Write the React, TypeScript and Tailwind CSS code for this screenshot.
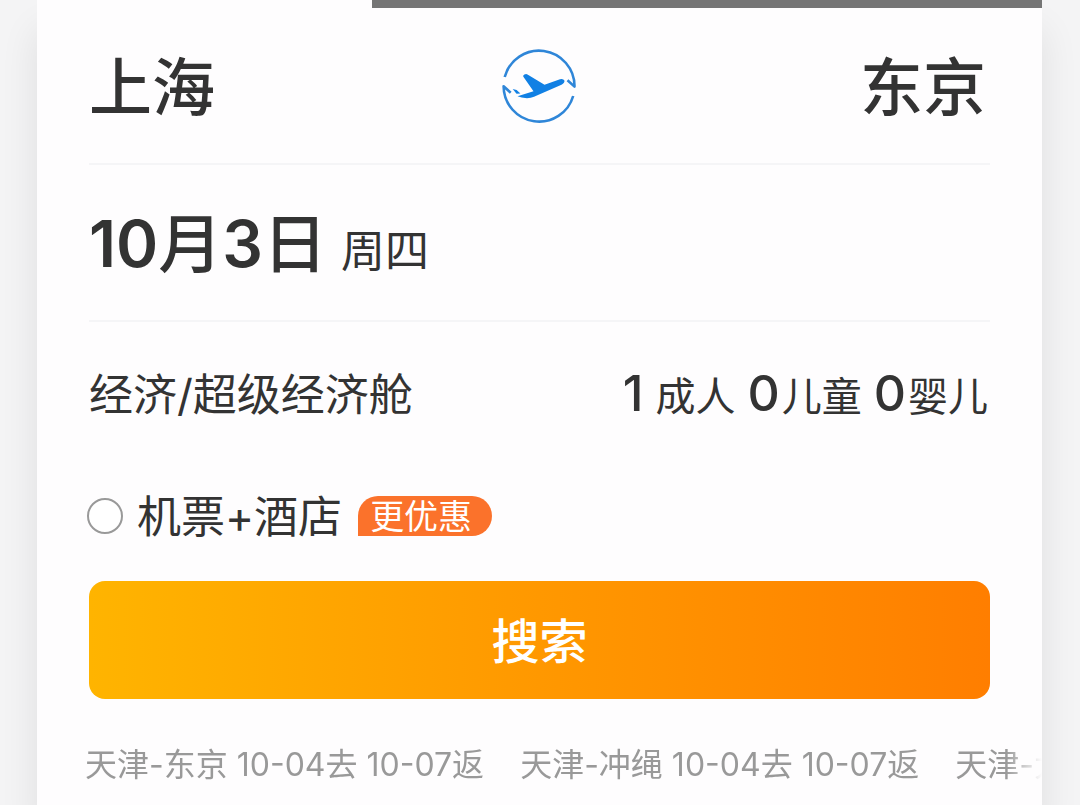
import React from "react";

const recent = [
  { route: "天津-东京", dates: "10-04去 10-07返" },
  { route: "天津-冲绳", dates: "10-04去 10-07返" },
  { route: "天津-大阪", dates: "10-04去 10-07返" },
];

function SwapIcon() {
  return (
    <svg viewBox="0 0 76 76" className="size-[76px]" aria-hidden="true">
      <g fill="none" stroke="#2f86d8" strokeWidth="2.6" strokeLinejoin="round">
        <path d="M3.7 29 A35.5 35.5 0 0 1 73.5 38.6 L66.5 32.3" />
        <path d="M72.2 48 A35.5 35.5 0 0 1 2.6 38.3 L9.7 44.7" />
      </g>
      <path
        fill="#1180e4"
        d="M22.2 28.6 Q22 27.3 23.4 26.6 Q25.2 25.6 26.5 26.6 L43.5 36.8 L59 31.2 Q62.4 30.4 63.4 32.6 Q63.9 35 60.5 36.8 L33 48.8 Q30 50.2 26 50.2 Q20 49.9 16.5 48.2 L32.5 43.2 Z"
      />
      <path fill="#1180e4" d="M11.7 41 L15.6 41.9 L19.4 45.4 L15.5 45.7 Z" />
    </svg>
  );
}

export default function App() {
  return (
    <div className="min-h-screen overflow-hidden bg-[#f4f4f5] pr-[38px] pl-[37px] font-['Inter','Noto_Sans_CJK_SC',sans-serif] text-[#333333]">
      <main className="min-h-screen bg-[#fefdfe] shadow-[0_30px_36px_rgba(0,0,0,0.09)]">
        <div className="flex h-2">
          <div className="w-1/3" />
          <div className="flex-1 bg-[#757575]" />
        </div>

        <form className="px-[52px]" onSubmit={(e) => e.preventDefault()}>
          <div className="flex h-[157px] items-center justify-between border-b-2 border-[#f5f5f7] text-[63px] leading-none font-medium">
            <button type="button" className="pt-1 pr-0.5">
              上海
            </button>
            <button type="button" aria-label="交换城市">
              <SwapIcon />
            </button>
            <button type="button" className="pt-1 pr-1">
              东京
            </button>
          </div>

          <button
            type="button"
            className="flex h-[157px] w-full items-center border-b-2 border-[#f5f5f7] pt-0.5"
          >
            <span className="flex items-baseline gap-3.5 leading-none">
              <span className="text-[64px] font-semibold">
                10<span className="font-medium">月</span>3
                <span className="font-medium">日</span>
              </span>
              <span className="text-[44px]">周四</span>
            </span>
          </button>

          <div className="flex h-[146px] items-center justify-between leading-none">
            <button type="button" className="text-[44px]">
              经济/超级经济舱
            </button>
            <button
              type="button"
              className="flex items-baseline gap-3 pr-0.5 pb-1 text-[40px]"
            >
              <span className="flex items-baseline gap-3">
                <span className="text-[50px] font-medium">1</span>成人
              </span>
              <span className="flex items-baseline gap-0.5">
                <span className="text-[50px] font-medium">0</span>儿童
              </span>
              <span className="flex items-baseline gap-0.5">
                <span className="text-[50px] font-medium">0</span>婴儿
              </span>
            </button>
          </div>

          <label className="-ml-0.5 flex h-24 items-center leading-none">
            <input
              type="radio"
              name="bundle"
              className="mr-3.5 size-9 appearance-none rounded-full border-2 border-[#999999] bg-white checked:bg-[#ff8a00]"
            />
            <span className="pt-0.5 text-[44px]">机票+酒店</span>
            <span className="ml-4 flex h-10 items-center rounded-t-[20px] rounded-br-[20px] bg-[#fb722b] pt-0.5 pr-5 pl-3 text-[34px] text-white">
              更优惠
            </span>
          </label>

          <button
            type="submit"
            className="mt-[17px] h-[118px] w-full rounded-2xl bg-linear-to-r from-[#ffb400] via-[#ff9800] to-[#ff7e00] pt-1 text-[48px] leading-none font-medium text-white"
          >
            搜索
          </button>
        </form>

        <nav
          aria-label="最近搜索"
          className="mt-[46px] ml-12 flex h-10 items-center gap-9 overflow-hidden mask-r-from-[calc(100%-36px)] mask-r-to-100% text-[32px] leading-none whitespace-nowrap text-[#999999]"
        >
          {recent.map((item) => (
            <a key={item.route} href="#search" className="shrink-0 py-1">
              {item.route} {item.dates}
            </a>
          ))}
        </nav>
      </main>
    </div>
  );
}
